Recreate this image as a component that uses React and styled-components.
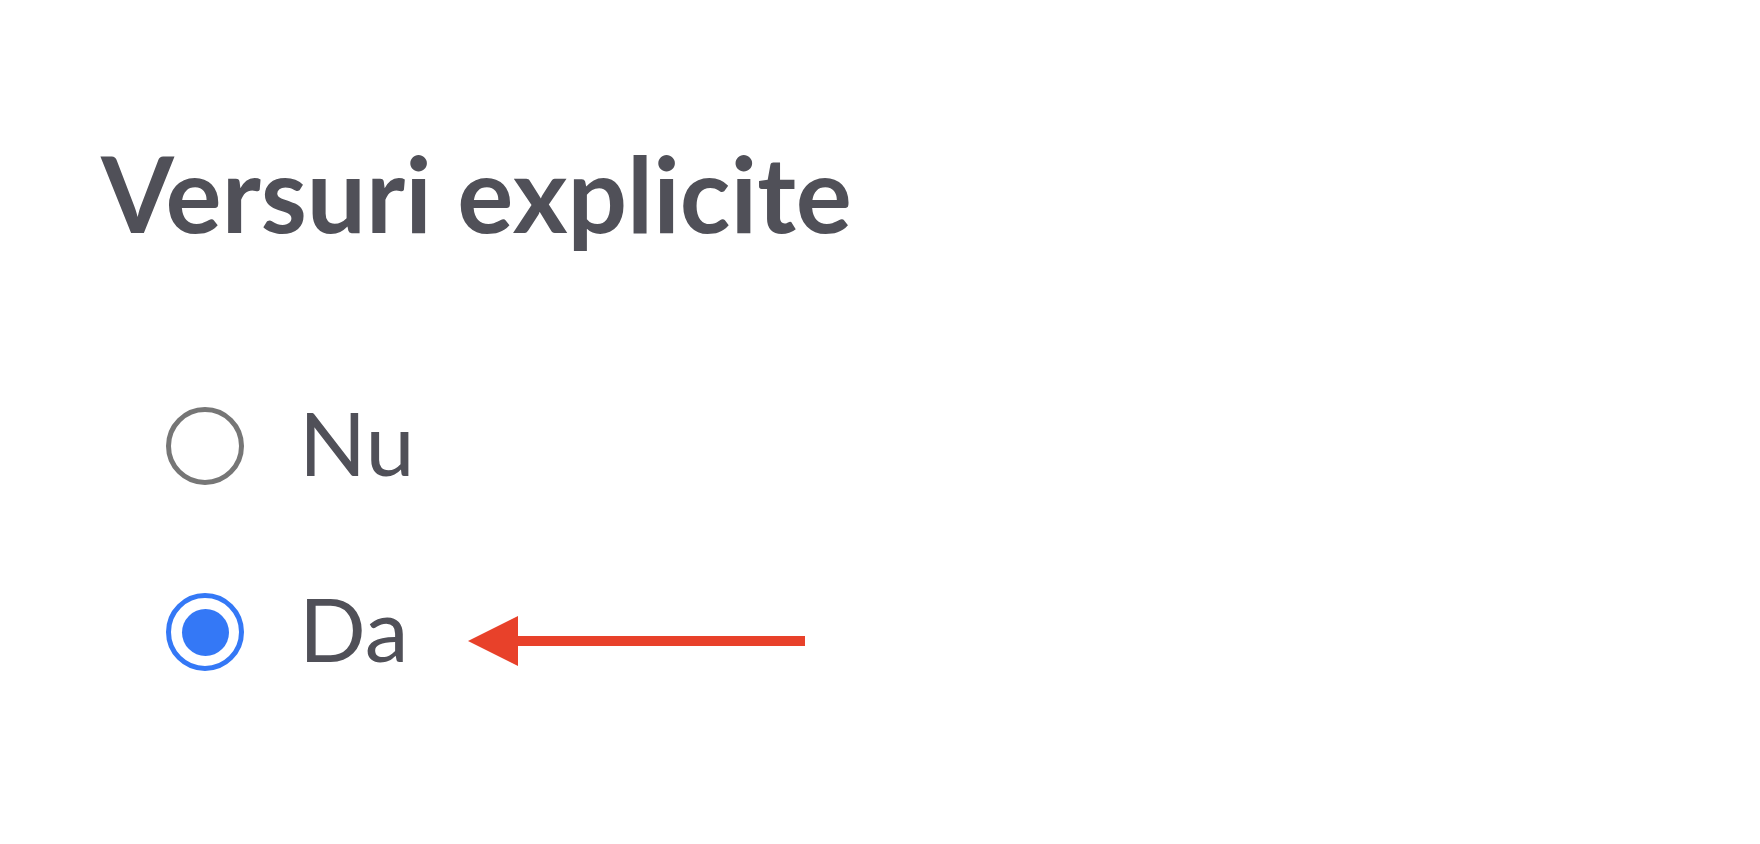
import React from "react";
import styled, { createGlobalStyle } from "styled-components";

const GlobalStyle = createGlobalStyle`
  html, body { margin: 0; padding: 0; background: #ffffff; }
  body { font-family: Lato, "Noto Sans", sans-serif; }
`;

const Page = styled.div`
  padding: 140px 0 0 101px;
  width: 1760px;
  height: 844px;
  box-sizing: border-box;
  display: flex;
  flex-direction: column;
`;

const Title = styled.h1`
  margin: 0;
  font-family: Lato, sans-serif;
  font-weight: 700;
  font-size: 105px;
  line-height: 1;
  color: #505058;
  letter-spacing: 0;
`;

const Group = styled.div`
  margin-top: 153px;
  padding-left: 65px;
  display: flex;
  flex-direction: column;
  gap: 98px;
`;

const Row = styled.label`
  display: flex;
  align-items: center;
  height: 88px;
`;

const Radio = styled.span`
  box-sizing: border-box;
  width: 78px;
  height: 78px;
  margin-top: 8px;
  border-radius: 50%;
  border: 5.5px solid ${(p) => (p.$checked ? "#3478f6" : "#767676")};
  display: flex;
  align-items: center;
  justify-content: center;
  flex-shrink: 0;
`;

const Dot = styled.span`
  width: 47px;
  height: 47px;
  border-radius: 50%;
  background: #3478f6;
`;

const Label = styled.span`
  margin-left: 55px;
  font-family: Lato, sans-serif;
  font-weight: 400;
  font-size: 88px;
  line-height: 1;
  color: #505058;
`;

const Arrow = styled.svg`
  margin-left: 59px;
  margin-top: 26px;
  flex-shrink: 0;
`;

export default function App() {
  return (
    <>
      <GlobalStyle />
      <Page>
        <Title>Versuri explicite</Title>
        <Group>
          <Row>
            <Radio />
            <Label>Nu</Label>
          </Row>
          <Row>
            <Radio $checked>
              <Dot />
            </Radio>
            <Label>Da</Label>
            <Arrow width="337" height="50" viewBox="0 0 337 50">
              <polygon points="0,25 50,0 50,50" fill="#e8412a" />
              <rect x="48" y="20" width="289" height="10" fill="#e8412a" />
            </Arrow>
          </Row>
        </Group>
      </Page>
    </>
  );
}
